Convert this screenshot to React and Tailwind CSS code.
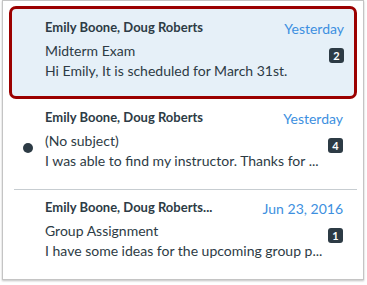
import React from "react";

const font = { fontFamily: "Lato, 'Noto Sans', sans-serif" };

function Badge({ n }) {
  return (
    <div className="mt-[7px] flex h-[15px] w-[15px] items-center justify-center rounded-[3px] bg-[#2d3b45] text-[11px] font-bold leading-none text-white">
      {n}
    </div>
  );
}

function RowContent({ name, date, subject, preview, count, unread, dotCol }) {
  return (
    <div className="flex">
      <div className={`${dotCol} shrink-0`}>
        {unread && (
          <div className="ml-[20px] mt-[36px] h-[10px] w-[10px] rounded-full bg-[#2d3b45]" />
        )}
      </div>
      <div className="min-w-0 flex-1">
        <div className="flex h-[20px] items-start justify-between">
          <div className="whitespace-nowrap text-[13px] font-bold leading-[20px] text-[#2d3b45]">
            {name}
          </div>
          <div className="mt-[2px] whitespace-nowrap text-[14px] leading-[20px] text-[#3d8fe0]">
            {date}
          </div>
        </div>
        <div className="mt-1 flex">
          <div className="min-w-0 flex-1 text-[14px] leading-[20px] text-[#2d3b45]">
            <div className="whitespace-nowrap">{subject}</div>
            <div className="whitespace-nowrap">{preview}</div>
          </div>
          <div className="flex w-[20px] shrink-0 justify-end">
            <Badge n={count} />
          </div>
        </div>
      </div>
    </div>
  );
}

export default function App() {
  return (
    <div className="h-[285px] w-[367px] bg-white" style={font}>
      <div className="ml-[2px] w-[362px] border border-[#c4c4c4] bg-white shadow-[0_1px_2px_rgba(0,0,0,0.25)]">
        <div className="mx-[6px] mt-[5px] rounded-[7px] border-[3px] border-[#9b0000] bg-[#e6f0f8] pb-[15px] pl-0 pr-[10px] pt-[8px]">
          <RowContent
            dotCol="w-[33px]"
            name="Emily Boone, Doug Roberts"
            date="Yesterday"
            subject="Midterm Exam"
            preview="Hi Emily, It is scheduled for March 31st."
            count="2"
          />
        </div>
        <div className="pb-[18px] pr-[20px] pt-[8px]">
          <RowContent
            dotCol="w-[42px]"
            unread
            name="Emily Boone, Doug Roberts"
            date="Yesterday"
            subject="(No subject)"
            preview="I was able to find my instructor. Thanks for ..."
            count="4"
          />
        </div>
        <div className="ml-[11px] mr-[6px] border-t border-[#c7cdd1]" />
        <div className="pb-[18px] pr-[20px] pt-[7px]">
          <RowContent
            dotCol="w-[42px]"
            name="Emily Boone, Doug Roberts..."
            date="Jun 23, 2016"
            subject="Group Assignment"
            preview="I have some ideas for the upcoming group p..."
            count="1"
          />
        </div>
      </div>
    </div>
  );
}
